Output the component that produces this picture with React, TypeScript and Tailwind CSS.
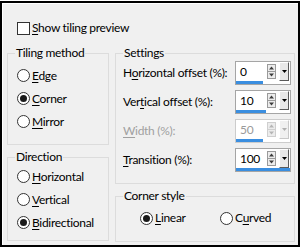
import React from "react";

type LabelProps = { pre?: string; u: string; post?: string };

function ULabel({ pre = "", u, post = "" }: LabelProps) {
  return (
    <span className="whitespace-nowrap">
      {pre}
      <span className="underline underline-offset-2">{u}</span>
      {post}
    </span>
  );
}

function Radio({ checked, label, rowClass }: { checked?: boolean; label: LabelProps; rowClass: string }) {
  return (
    <div className={`flex items-center ${rowClass}`}>
      <span className="w-[13px] h-[13px] rounded-full border border-[#333333] bg-white flex items-center justify-center shrink-0">
        {checked && <span className="w-[7px] h-[7px] rounded-full bg-[#1a1a1a]" />}
      </span>
      <span className="ml-[2px]">
        <ULabel {...label} />
      </span>
    </div>
  );
}

function SpinGlyph({ disabled }: { disabled?: boolean }) {
  const c = disabled ? "#b5b5b5" : "#3c3c3c";
  const b = disabled ? "#cfcfcf" : "#9a9a9a";
  return (
    <svg width="9" height="15" viewBox="0 0 9 15" className="shrink-0">
      <rect x="0.5" y="0.5" width="8" height="14" fill="#ececec" stroke={b} />
      <line x1="1" y1="7.5" x2="8" y2="7.5" stroke={b} />
      <path d="M4.5 2.5 L7 5.5 L2 5.5 Z" fill={c} />
      <path d="M2 9.5 L7 9.5 L4.5 12.5 Z" fill={c} />
    </svg>
  );
}

function DropBtn({ disabled }: { disabled?: boolean }) {
  return (
    <div
      className={`w-[10px] h-[19px] shrink-0 flex items-center justify-center border-t border-l border-t-white border-l-white border-r border-b ${
        disabled ? "border-r-[#c8c8c8] border-b-[#c8c8c8] bg-[#f0f0f0]" : "border-r-[#5a5a5a] border-b-[#5a5a5a] bg-[#e8e8e8]"
      }`}
    >
      <svg width="5" height="3" viewBox="0 0 5 3">
        <path d="M0 0 L5 0 L2.5 3 Z" fill={disabled ? "#b0b0b0" : "#000"} />
      </svg>
    </div>
  );
}

function Spin({ value, barClass, disabled }: { value: string; barClass: string; disabled?: boolean }) {
  return (
    <div
      className={`w-[56px] h-[24px] shrink-0 border bg-white flex flex-col ${
        disabled ? "border-[#cccccc]" : "border-[#a5a5a5]"
      }`}
    >
      <div className="flex-1 flex items-center pl-[4px] pr-[1px] gap-[3px]">
        <span className={`flex-1 leading-none pt-[1px] ${disabled ? "text-[#9a9a9a]" : "text-black"}`}>{value}</span>
        <SpinGlyph disabled={disabled} />
        <DropBtn disabled={disabled} />
      </div>
      <div className={`h-[3px] bg-[#3a8ee0] ${barClass}`} />
    </div>
  );
}

function SettingRow({ label, disabled, children }: { label: LabelProps; disabled?: boolean; children: React.ReactNode }) {
  return (
    <div className="flex items-center h-[24px] pl-[7px] pr-[3px]">
      <span className={`flex-1 ${disabled ? "text-[#a0a0a0]" : "text-black"}`}>
        <ULabel {...label} />
      </span>
      {children}
    </div>
  );
}

function Group({ title, className, children }: { title: string; className: string; children: React.ReactNode }) {
  return (
    <fieldset className={`border border-[#dcdcdc] ${className}`}>
      <legend className="ml-[7px] px-[1px]">{title}</legend>
      {children}
    </fieldset>
  );
}

export default function App() {
  return (
    <div className="w-[306px] h-[248px] bg-white pt-px text-[12px] leading-[16px] tracking-[-0.3px] text-black font-['Lato',sans-serif]">
      <div className="w-[300px] h-[246px] border-2 border-black bg-[#f0f0f0] shadow-[inset_1px_1px_0_#ffffff] flex flex-col">
        <div className="flex items-center h-[16px] mt-[17px] ml-[15px]">
          <span className="w-[13px] h-[13px] border border-[#333333] bg-white shrink-0" />
          <span className="ml-[2px]">
            <ULabel u="S" post="how tiling preview" />
          </span>
        </div>
        <div className="flex gap-[6px] ml-[5px] mt-[9px]">
          <div className="w-[102px] flex flex-col gap-[4px]">
            <Group title="Tiling method" className="h-[100px]">
              <div className="pl-[9px] pt-[3px] flex flex-col">
                <Radio rowClass="h-[23px]" label={{ u: "E", post: "dge" }} />
                <Radio rowClass="h-[23px]" checked label={{ u: "C", post: "orner" }} />
                <Radio rowClass="h-[23px]" label={{ u: "M", post: "irror" }} />
              </div>
            </Group>
            <Group title="Direction" className="h-[92px]">
              <div className="pl-[9px] flex flex-col">
                <Radio rowClass="h-[23px]" label={{ u: "H", post: "orizontal" }} />
                <Radio rowClass="h-[23px]" label={{ u: "V", post: "ertical" }} />
                <Radio rowClass="h-[23px]" checked label={{ u: "B", post: "idirectional" }} />
              </div>
            </Group>
          </div>
          <div className="w-[180px] flex flex-col gap-[4px]">
            <Group title="Settings" className="h-[139px]">
              <div className="flex flex-col gap-[5px]">
                <SettingRow label={{ pre: "H", u: "o", post: "rizontal offset (%):" }}>
                  <Spin value="0" barClass="w-[27px]" />
                </SettingRow>
                <SettingRow label={{ pre: "Ver", u: "t", post: "ical offset (%):" }}>
                  <Spin value="10" barClass="w-[30px]" />
                </SettingRow>
                <SettingRow disabled label={{ u: "W", post: "idth (%):" }}>
                  <Spin value="50" barClass="w-[27px]" disabled />
                </SettingRow>
                <SettingRow label={{ u: "T", post: "ransition (%):" }}>
                  <Spin value="100" barClass="w-full" />
                </SettingRow>
              </div>
            </Group>
            <Group title="Corner style" className="h-[54px]">
              <div className="pt-[6px] pl-[24px] flex gap-[14px]">
                <div className="w-[66px]">
                  <Radio rowClass="h-[16px]" checked label={{ u: "L", post: "inear" }} />
                </div>
                <Radio rowClass="h-[16px]" label={{ pre: "C", u: "u", post: "rved" }} />
              </div>
            </Group>
          </div>
        </div>
      </div>
    </div>
  );
}
